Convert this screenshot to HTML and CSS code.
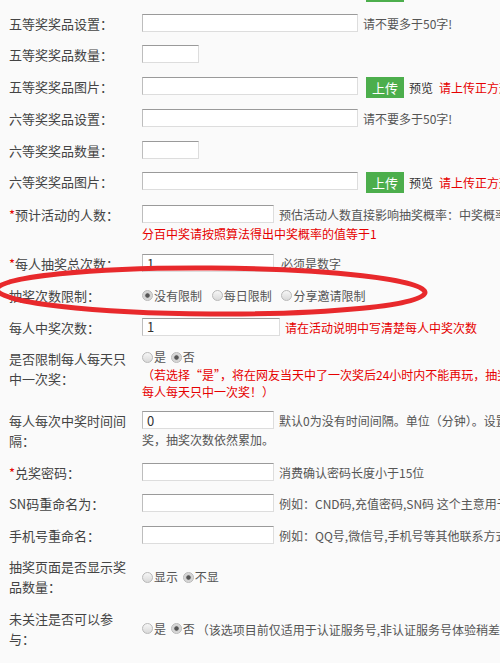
FILE: index.html
```html
<!DOCTYPE html>
<html>
<head>
    <title>抽奖活动设置</title>
    <meta charset="utf-8"/>
    <link rel="stylesheet" href="styles.css">
</head>
<body>
<form class="form">
    <div class="row">
        <label class="name">四等奖奖品图片：</label>
        <div class="field">
            <input class="txt w-lg" type="text"><button type="button" class="btn-up">上传</button><span class="view">预览</span><span class="red tip-img">请上传正方形图片，建议尺寸200*200</span>
        </div>
    </div>
    <div class="row">
        <label class="name">五等奖奖品设置：</label>
        <div class="field"><input class="txt w-lg" type="text"><span class="tip">请不要多于50字!</span></div>
    </div>
    <div class="row">
        <label class="name">五等奖奖品数量：</label>
        <div class="field"><input class="txt w-sm" type="text"></div>
    </div>
    <div class="row">
        <label class="name">五等奖奖品图片：</label>
        <div class="field">
            <input class="txt w-lg" type="text"><button type="button" class="btn-up">上传</button><span class="view">预览</span><span class="red tip-img">请上传正方形图片，建议尺寸200*200</span>
        </div>
    </div>
    <div class="row">
        <label class="name">六等奖奖品设置：</label>
        <div class="field"><input class="txt w-lg" type="text"><span class="tip">请不要多于50字!</span></div>
    </div>
    <div class="row">
        <label class="name">六等奖奖品数量：</label>
        <div class="field"><input class="txt w-sm" type="text"></div>
    </div>
    <div class="row">
        <label class="name">六等奖奖品图片：</label>
        <div class="field">
            <input class="txt w-lg" type="text"><button type="button" class="btn-up">上传</button><span class="view">预览</span><span class="red tip-img">请上传正方形图片，建议尺寸200*200</span>
        </div>
    </div>
    <div class="row">
        <label class="name"><span class="star">*</span>预计活动的人数：</label>
        <div class="field">
            <input class="txt w-md" type="text"><span class="tip">预估活动人数直接影响抽奖概率：中奖概率 = 奖品总数/(预估活动人数*每人抽奖次数) 如果要百</span>
            <div class="red sub">分百中奖请按照算法得出中奖概率的值等于1</div>
        </div>
    </div>
    <div class="row">
        <label class="name"><span class="star">*</span>每人抽奖总次数：</label>
        <div class="field"><input class="txt w-md" type="text" value="1"><span class="tip tip-wide">必须是数字</span></div>
    </div>
    <div class="row">
        <label class="name">抽奖次数限制：</label>
        <div class="field">
            <label class="opt opt-wide"><input class="radio" type="radio" name="limit" checked>没有限制</label>
            <label class="opt opt-wide"><input class="radio" type="radio" name="limit">每日限制</label>
            <label class="opt opt-wide"><input class="radio" type="radio" name="limit">分享邀请限制</label>
        </div>
    </div>
    <div class="row">
        <label class="name">每人中奖次数：</label>
        <div class="field"><input class="txt w-num" type="text" value="1"><span class="red tip">请在活动说明中写清楚每人中奖次数</span></div>
    </div>
    <div class="row">
        <label class="name">是否限制每人每天只中一次奖：</label>
        <div class="field">
            <div class="radios">
                <label class="opt"><input class="radio" type="radio" name="daily">是</label>
                <label class="opt"><input class="radio" type="radio" name="daily" checked>否</label>
            </div>
            <div class="red note">（若选择“是”，将在网友当天中了一次奖后24小时内不能再玩，抽奖次数依然累加，请在活动说明中写清楚<br>每人每天只中一次奖！）</div>
        </div>
    </div>
    <div class="row">
        <label class="name">每人每次中奖时间间隔：</label>
        <div class="field flow">
            <input class="txt w-md" type="text" value="0"><span class="tip">默认0为没有时间间隔。单位（分钟）。设置后网友中奖后需间隔设定的时间才能再次中</span><br>奖，抽奖次数依然累加。
        </div>
    </div>
    <div class="row">
        <label class="name"><span class="star">*</span>兑奖密码：</label>
        <div class="field"><input class="txt w-md" type="text"><span class="tip">消费确认密码长度小于15位</span></div>
    </div>
    <div class="row">
        <label class="name">SN码重命名为：</label>
        <div class="field"><input class="txt w-md" type="text"><span class="tip">例如：CND码,充值密码,SN码 这个主意用于活动兑奖</span></div>
    </div>
    <div class="row">
        <label class="name">手机号重命名：</label>
        <div class="field"><input class="txt w-md" type="text"><span class="tip">例如：QQ号,微信号,手机号等其他联系方式</span></div>
    </div>
    <div class="row">
        <label class="name">抽奖页面是否显示奖品数量：</label>
        <div class="field mid">
            <label class="opt"><input class="radio" type="radio" name="shownum">显示</label>
            <label class="opt"><input class="radio" type="radio" name="shownum" checked>不显</label>
        </div>
    </div>
    <div class="row">
        <label class="name">未关注是否可以参与：</label>
        <div class="field mid">
            <label class="opt"><input class="radio" type="radio" name="follow">是</label>
            <label class="opt"><input class="radio" type="radio" name="follow" checked>否</label><span class="grey">（该选项目前仅适用于认证服务号,非认证服务号体验稍差）</span>
        </div>
    </div>
    <div class="row">
        <label class="name">是否开启分享获得抽奖机会：</label>
        <div class="field mid"></div>
    </div>
</form>
<svg class="mark" width="440" height="64" viewBox="0 0 440 64">
    <ellipse cx="212" cy="31" rx="214" ry="23" fill="none" stroke="#e8292c" stroke-width="5" transform="rotate(0.4 212 31)"/>
</svg>
</body>
</html>
```

FILE: styles.css
```css
html {
    overflow: hidden;
}

body {
    margin: 0;
    padding: 0 0 0 9px;
    background-color: #fafafa;
    font-family: "Noto Sans CJK SC", "Noto Sans", sans-serif;
    color: #444;
    position: relative;
}

.form {
    width: 820px;
    margin-top: -19px;
}

.row {
    display: flex;
    align-items: flex-start;
    margin-bottom: 11.5px;
}

.name {
    flex: none;
    width: 123px;
    padding-right: 10px;
    font-size: 13px;
    line-height: 20px;
    color: #444;
}

.star {
    color: #e60000;
}

.field {
    flex: 1;
    font-size: 12px;
    line-height: 20px;
    color: #555;
    white-space: nowrap;
}

.field.flow {
    line-height: 19px;
}

.field.mid {
    padding-top: 10px;
}

.txt {
    box-sizing: border-box;
    height: 18px;
    padding: 0 4px;
    margin: 0;
    vertical-align: top;
    border: 1px solid #ddd;
    border-top-color: #9a9a9a;
    border-left-color: #bdbdbd;
    background-color: #fff;
    font-family: inherit;
    font-size: 13px;
    color: #333;
    line-height: 16px;
}

.w-lg { width: 216px; }
.w-sm { width: 57px; }
.w-md { width: 132px; }
.w-num { width: 138px; }

.tip {
    margin-left: 5px;
}

.tip-wide {
    margin-left: 7px;
}

.btn-up {
    height: 21px;
    margin: 0 0 0 8px;
    padding: 0 6px;
    vertical-align: top;
    border: none;
    background-color: #4cae4c;
    color: #fff;
    font-family: inherit;
    font-size: 13px;
    line-height: 21px;
}

.view {
    margin-left: 5px;
    color: #333;
    line-height: 21px;
}

.red {
    color: #e60000;
}

.tip-img {
    margin-left: 6px;
}

.sub {
    line-height: 18px;
}

.note {
    line-height: 17px;
    margin-top: -2px;
}

.radios {
    line-height: 20px;
    margin-top: -2px;
}

.opt {
    display: inline-flex;
    align-items: center;
    margin-right: 2px;
    color: #555;
}

.opt-wide {
    margin-right: 7px;
}

.radio {
    appearance: none;
    -webkit-appearance: none;
    box-sizing: border-box;
    width: 11px;
    height: 11px;
    margin: 0 1px 0 0;
    border: 1px solid #b8b8b8;
    border-radius: 50%;
    background: linear-gradient(#f6f6f6, #d9d9d9);
}

.radio:checked {
    background: radial-gradient(circle, #555 0, #555 1.8px, #cfcfcf 2.6px, #e6e6e6 100%);
}

.grey {
    color: #555;
}

.mark {
    position: absolute;
    left: -1px;
    top: 260px;
    pointer-events: none;
}
```
